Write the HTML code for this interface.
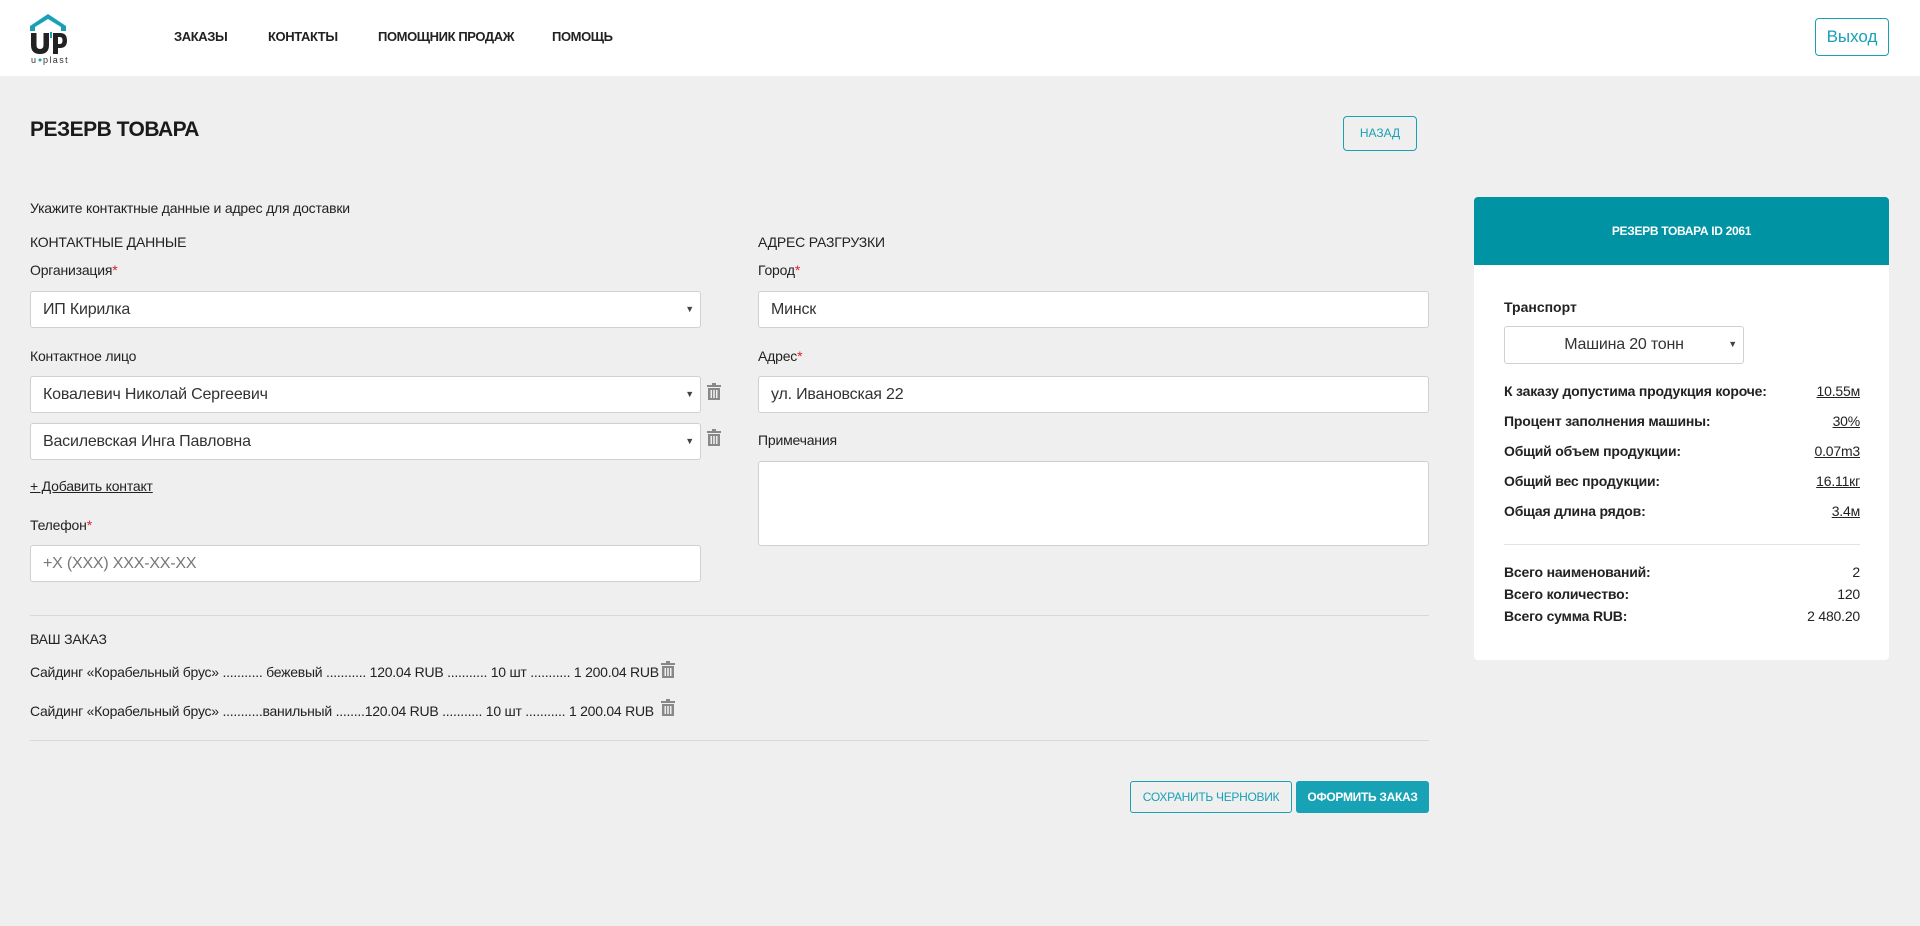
<!DOCTYPE html>
<html><head><meta charset="utf-8"><style>
*{box-sizing:border-box;margin:0;padding:0}
body{width:1920px;height:926px;background:#efefef;font-family:"Liberation Sans",sans-serif;color:#222;position:relative;overflow:hidden}
.a{position:absolute}
.hdr{left:0;top:0;width:1920px;height:76px;background:#fff}
.nav{font-size:13px;font-weight:bold;top:29px;color:#222;letter-spacing:-0.4px}
.lbl{font-size:14px;color:#222;letter-spacing:-0.2px}
.req{color:#d9232d}
.inp{background:#fff;border:1px solid #d0d0d0;border-radius:3px;height:37px;font-size:16px;color:#333;padding-left:12px;line-height:35px;letter-spacing:-0.2px}
.inp .arr{position:absolute;right:6px;top:0;font-size:9px;color:#444}
.hr{height:1px;background:#d8d8d8}
.trash{width:14px;height:17px}
.row{font-size:14px;display:flex;justify-content:space-between;width:356px;letter-spacing:-0.2px}
.b{font-weight:bold}
.ord{font-size:14px;letter-spacing:-0.25px}
</style></head><body>
<div class="a hdr"></div>
<svg class="a" style="left:28px;top:13px" width="40" height="52" viewBox="0 0 40 52">
<path d="M2 13 L20 1 L38 13 L38 18 L33 18 L33 14 L20 6 L7 14 L7 18 L2 18 Z" fill="#1aa0b4"/>
<path d="M3 20 h5.5 v12 q0 4 3.5 4 q3.5 0 3.5 -4 v-12 h5.5 v12 q0 9 -9 9 q-9 0 -9 -9 Z" fill="#222"/>
<rect x="22" y="19" width="2" height="6" fill="#1aa0b4"/>
<path d="M25 20 h7 q7 0 7 7.5 q0 7.5 -7 7.5 h-2 v6 h-5 Z M30 24 v7 h2 q2.5 0 2.5 -3.5 q0 -3.5 -2.5 -3.5 Z" fill="#222" fill-rule="evenodd"/>
<text x="3" y="50" font-size="9" font-family="Liberation Sans" fill="#333" letter-spacing="1.5">u</text>
<circle cx="12" cy="47" r="1.5" fill="#1aa0b4"/>
<text x="15" y="50" font-size="9" font-family="Liberation Sans" fill="#333" letter-spacing="1.4">plast</text>
</svg>
<div class="a nav" style="left:174px">ЗАКАЗЫ</div>
<div class="a nav" style="left:268px">КОНТАКТЫ</div>
<div class="a nav" style="left:378px">ПОМОЩНИК ПРОДАЖ</div>
<div class="a nav" style="left:552px">ПОМОЩЬ</div>
<div class="a" style="left:1815px;top:18px;width:74px;height:38px;border:1px solid #1aa0b4;border-radius:4px;color:#1aa0b4;font-size:17px;text-align:center;line-height:36px">Выход</div>

<div class="a" style="left:30px;top:118px;font-size:21px;font-weight:bold;color:#1a1a1a;letter-spacing:-0.5px">РЕЗЕРВ ТОВАРА</div>
<div class="a" style="left:1343px;top:116px;width:74px;height:35px;border:1px solid #1aa0b4;border-radius:4px;color:#1aa0b4;font-size:12px;text-align:center;line-height:33px">НАЗАД</div>

<div class="a lbl" style="left:30px;top:200px">Укажите контактные данные и адрес для доставки</div>
<div class="a lbl" style="left:30px;top:234px">КОНТАКТНЫЕ ДАННЫЕ</div>
<div class="a lbl" style="left:30px;top:262px">Организация<span class="req">*</span></div>
<div class="a inp" style="left:30px;top:291px;width:671px">ИП Кирилка<span class="arr">▼</span></div>
<div class="a lbl" style="left:30px;top:348px">Контактное лицо</div>
<div class="a inp" style="left:30px;top:376px;width:671px">Ковалевич Николай Сергеевич<span class="arr">▼</span></div>
<div class="a inp" style="left:30px;top:423px;width:671px">Василевская Инга Павловна<span class="arr">▼</span></div>
<svg class="a trash" style="left:707px;top:383px" viewBox="0 0 14 17"><rect x="0" y="2" width="14" height="2" fill="#888"/><rect x="5" y="0" width="4" height="2" fill="#888"/><path d="M1 5h12v12H1Z M3.5 7v8h1.5V7Z M6.2 7v8h1.6V7Z M9 7v8h1.5V7Z" fill="#888" fill-rule="evenodd"/></svg>
<svg class="a trash" style="left:707px;top:429px" viewBox="0 0 14 17"><rect x="0" y="2" width="14" height="2" fill="#888"/><rect x="5" y="0" width="4" height="2" fill="#888"/><path d="M1 5h12v12H1Z M3.5 7v8h1.5V7Z M6.2 7v8h1.6V7Z M9 7v8h1.5V7Z" fill="#888" fill-rule="evenodd"/></svg>
<div class="a lbl" style="left:30px;top:478px;text-decoration:underline">+ Добавить контакт</div>
<div class="a lbl" style="left:30px;top:517px">Телефон<span class="req">*</span></div>
<div class="a inp" style="left:30px;top:545px;width:671px;color:#777">+X (XXX) XXX-XX-XX</div>

<div class="a lbl" style="left:758px;top:234px">АДРЕС РАЗГРУЗКИ</div>
<div class="a lbl" style="left:758px;top:262px">Город<span class="req">*</span></div>
<div class="a inp" style="left:758px;top:291px;width:671px">Минск</div>
<div class="a lbl" style="left:758px;top:348px">Адрес<span class="req">*</span></div>
<div class="a inp" style="left:758px;top:376px;width:671px">ул. Ивановская 22</div>
<div class="a lbl" style="left:758px;top:432px">Примечания</div>
<div class="a inp" style="left:758px;top:461px;width:671px;height:85px"></div>

<div class="a hr" style="left:30px;top:615px;width:1399px"></div>
<div class="a lbl" style="left:30px;top:631px">ВАШ ЗАКАЗ</div>
<div class="a ord" style="left:30px;top:664px">Сайдинг «Корабельный брус» ........... бежевый ........... 120.04 RUB ........... 10 шт ........... 1 200.04 RUB</div>
<div class="a ord" style="left:30px;top:703px">Сайдинг «Корабельный брус» ...........ванильный ........120.04 RUB ........... 10 шт ........... 1 200.04 RUB</div>
<svg class="a trash" style="left:661px;top:661px" viewBox="0 0 14 17"><rect x="0" y="2" width="14" height="2" fill="#888"/><rect x="5" y="0" width="4" height="2" fill="#888"/><path d="M1 5h12v12H1Z M3.5 7v8h1.5V7Z M6.2 7v8h1.6V7Z M9 7v8h1.5V7Z" fill="#888" fill-rule="evenodd"/></svg>
<svg class="a trash" style="left:661px;top:699px" viewBox="0 0 14 17"><rect x="0" y="2" width="14" height="2" fill="#888"/><rect x="5" y="0" width="4" height="2" fill="#888"/><path d="M1 5h12v12H1Z M3.5 7v8h1.5V7Z M6.2 7v8h1.6V7Z M9 7v8h1.5V7Z" fill="#888" fill-rule="evenodd"/></svg>
<div class="a hr" style="left:30px;top:740px;width:1399px"></div>

<div class="a" style="left:1130px;top:781px;width:162px;height:32px;border:1px solid #1aa0b4;border-radius:3px;color:#1aa0b4;font-size:12px;text-align:center;line-height:30px;letter-spacing:-0.3px">СОХРАНИТЬ ЧЕРНОВИК</div>
<div class="a" style="left:1296px;top:781px;width:133px;height:32px;background:#17a2b6;border-radius:3px;color:#fff;font-size:12px;font-weight:bold;text-align:center;line-height:32px;letter-spacing:-0.3px">ОФОРМИТЬ ЗАКАЗ</div>

<div class="a" style="left:1474px;top:197px;width:415px;height:463px;background:#fff;border-radius:4px;overflow:hidden">
 <div style="height:68px;background:#0093a3;color:#fff;font-size:12px;font-weight:bold;text-align:center;line-height:68px;letter-spacing:-0.3px">РЕЗЕРВ ТОВАРА ID 2061</div>
</div>
<div class="a b" style="left:1504px;top:299px;font-size:14px">Транспорт</div>
<div class="a inp" style="left:1504px;top:326px;width:240px;height:38px;text-align:center;padding-left:0;font-size:16px">Машина 20 тонн<span class="arr">▼</span></div>
<div class="a" style="left:1504px;top:383px">
 <div class="row" style="margin-bottom:14px"><span class="b">К заказу допустима продукция короче:</span><u>10.55м</u></div>
 <div class="row" style="margin-bottom:14px"><span class="b">Процент заполнения машины:</span><u>30%</u></div>
 <div class="row" style="margin-bottom:14px"><span class="b">Общий объем продукции:</span><u>0.07m3</u></div>
 <div class="row" style="margin-bottom:14px"><span class="b">Общий вес продукции:</span><u>16.11кг</u></div>
 <div class="row"><span class="b">Общая длина рядов:</span><u>3.4м</u></div>
</div>
<div class="a hr" style="left:1504px;top:544px;width:356px;background:#e2e2e2"></div>
<div class="a" style="left:1504px;top:564px">
 <div class="row" style="margin-bottom:6px"><span class="b">Всего наименований:</span><span>2</span></div>
 <div class="row" style="margin-bottom:6px"><span class="b">Всего количество:</span><span>120</span></div>
 <div class="row"><span class="b">Всего сумма RUB:</span><span>2 480.20</span></div>
</div>
</body></html>
